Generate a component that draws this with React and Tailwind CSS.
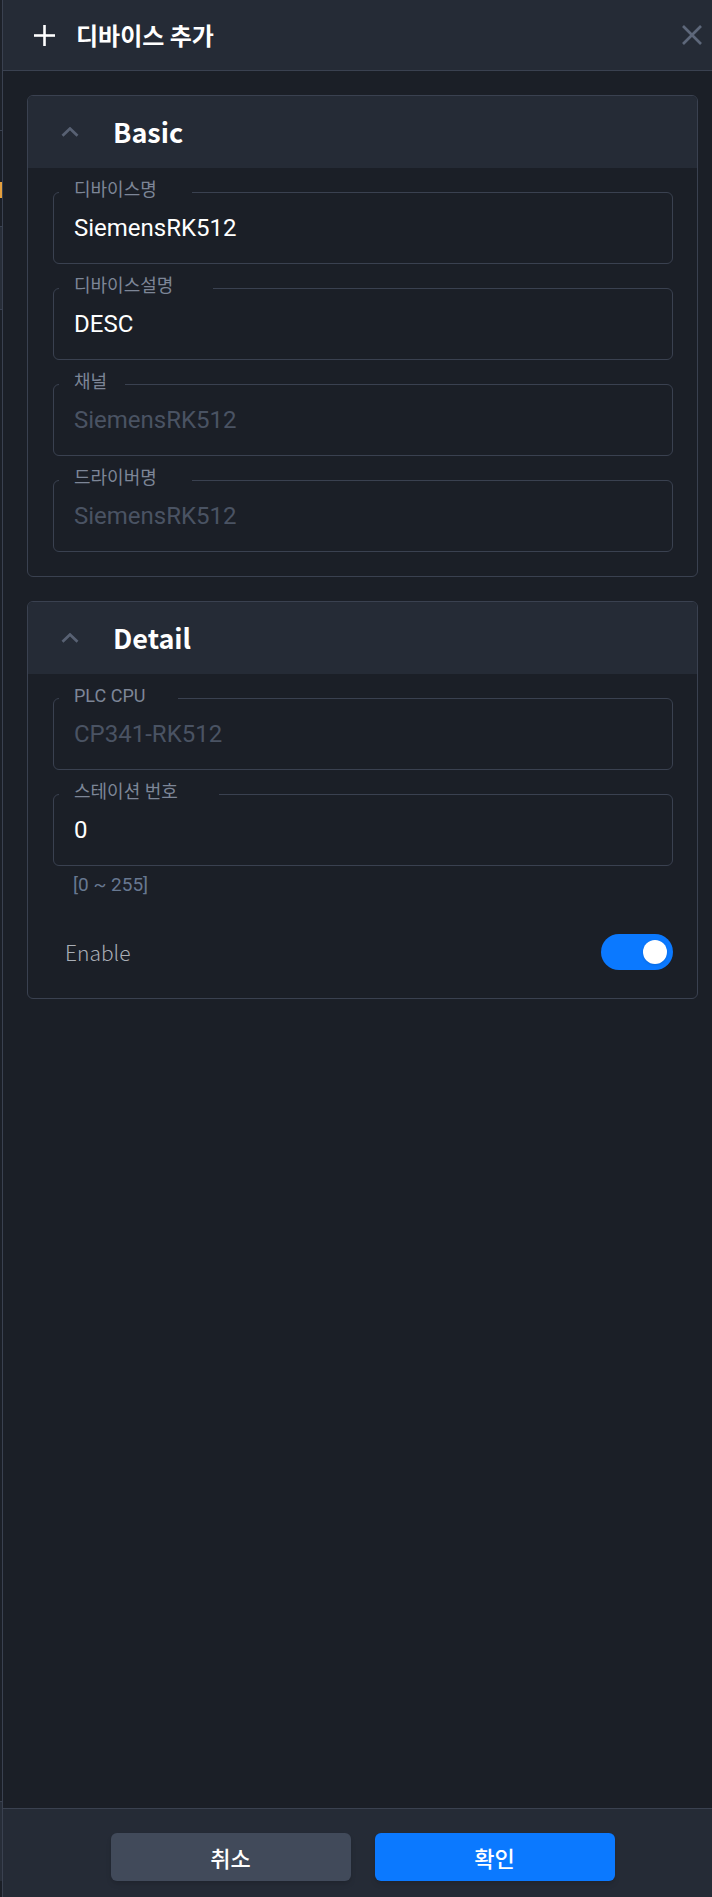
import React from "react";

const FONT_UI = { fontFamily: 'Roboto, "Noto Sans CJK KR", sans-serif' };
const FONT_KR = { fontFamily: '"Noto Sans CJK KR", "Noto Sans", sans-serif' };

function Field({ label, value, notch, disabled }) {
  return (
    <div className="relative h-[72px] rounded-[6px] border border-[#3a4150] flex items-center pl-[20px]">
      <span
        className="absolute left-[5px] top-[-14px] h-[22px] bg-[#1b1f27] pl-[15px] text-[18px] leading-[22px] text-[#7d8697] whitespace-nowrap"
        style={{ ...FONT_UI, width: notch }}
      >
        {label}
      </span>
      <span
        className={
          "text-[24px] leading-[28px] " +
          (disabled ? "text-[#4a5363]" : "text-white")
        }
        style={FONT_UI}
      >
        {value}
      </span>
    </div>
  );
}

function Chevron() {
  return (
    <svg width="18" height="10" viewBox="0 0 18 10" className="shrink-0">
      <polyline
        points="1.5,8.8 9,1.6 16.5,8.8"
        fill="none"
        stroke="#586173"
        strokeWidth="2.8"
      />
    </svg>
  );
}

function Card({ title, children }) {
  return (
    <div className="rounded-[6px] border border-[#3a4150] overflow-hidden">
      <div className="h-[72px] bg-[#252b36] flex items-center pl-[33px]">
        <Chevron />
        <span
          className="ml-[34px] text-[27px] leading-[32px] font-bold text-white"
          style={FONT_KR}
        >
          {title}
        </span>
      </div>
      {children}
    </div>
  );
}

function LeftStrip() {
  return (
    <div className="w-[2px] shrink-0 h-full flex flex-col bg-[#1b1f27]">
      <div className="h-[130px] bg-[#1d2129]" />
      <div className="h-[1px] bg-[#3a4150]" />
      <div className="h-[51px]" />
      <div className="h-[16px] bg-[#e5a03e]" />
      <div className="h-[28px]" />
      <div className="h-[1px] bg-[#3a4150]" />
      <div className="h-[82px] bg-[#272d38]" />
      <div className="h-[1px] bg-[#3a4150]" />
      <div className="flex-1" />
      <div className="h-[1px] bg-[#3a4150]" />
      <div className="h-[79px] bg-[#272d38]" />
      <div className="h-[16px]" />
    </div>
  );
}

export default function App() {
  return (
    <div className="w-[712px] h-[1897px] overflow-hidden flex bg-[#1b1f27]">
      <LeftStrip />
      <div className="w-[720px] shrink-0 h-full flex flex-col border-l border-[#3a4150] bg-[#1b1f27]">
        {/* Header */}
        <div className="h-[71px] shrink-0 border-b border-[#3a4150] bg-[#252b36] flex items-center justify-between pl-[31px] pr-[20px]">
          <div className="flex items-center">
            <svg width="21" height="21" viewBox="0 0 21 21">
              <line x1="0" y1="10.5" x2="21" y2="10.5" stroke="#ffffff" strokeWidth="2.6" />
              <line x1="10.5" y1="0" x2="10.5" y2="21" stroke="#ffffff" strokeWidth="2.6" />
            </svg>
            <span
              className="ml-[21px] text-[24px] leading-[30px] font-bold text-white"
              style={FONT_KR}
            >
              디바이스 추가
            </span>
          </div>
          <svg width="20" height="20" viewBox="0 0 20 20">
            <line x1="1" y1="1" x2="19" y2="19" stroke="#5d677a" strokeWidth="2.6" />
            <line x1="19" y1="1" x2="1" y2="19" stroke="#5d677a" strokeWidth="2.6" />
          </svg>
        </div>

        {/* Body */}
        <div className="flex-1 flex flex-col gap-[24px] pt-[24px] pl-[24px] pr-[24px]">
          <Card title="Basic">
            <div className="flex flex-col gap-[24px] pt-[24px] pb-[24px] pl-[25px] pr-[24px]">
              <Field label="디바이스명" value="SiemensRK512" notch={133} />
              <Field label="디바이스설명" value="DESC" notch={154} />
              <Field label="채널" value="SiemensRK512" notch={66} disabled />
              <Field label="드라이버명" value="SiemensRK512" notch={133} disabled />
            </div>
          </Card>

          <Card title="Detail">
            <div className="flex flex-col pt-[24px] pb-[28px] pl-[25px] pr-[24px]">
              <Field label="PLC CPU" value="CP341-RK512" notch={119} disabled />
              <div className="mt-[24px]">
                <Field label="스테이션 번호" value="0" notch={160} />
              </div>
              <div
                className="mt-[7px] pl-[20px] text-[19px] leading-[24px] text-[#687891]"
                style={FONT_UI}
              >
                [0 ~ 255]
              </div>
              <div className="mt-[37px] h-[36px] flex items-center justify-between pl-[12px]">
                <span
                  className="text-[21px] leading-[28px] font-light text-[#a9aeb6]"
                  style={FONT_KR}
                >
                  Enable
                </span>
                <div className="w-[72px] h-[36px] rounded-full bg-[#0b79ff] flex items-center justify-end pr-[6px]">
                  <div className="w-[24px] h-[24px] rounded-full bg-white shadow-sm" />
                </div>
              </div>
            </div>
          </Card>
        </div>

        {/* Footer */}
        <div className="h-[89px] shrink-0 border-t border-[#3a4150] bg-[#252b36] flex justify-center gap-[24px] pt-[24px]">
          <button
            className="w-[240px] h-[48px] rounded-[6px] bg-[#414a5a] text-white text-[22px] font-medium shadow-md"
            style={FONT_KR}
          >
            취소
          </button>
          <button
            className="w-[240px] h-[48px] rounded-[6px] bg-[#0b79ff] text-white text-[22px] font-medium shadow-md"
            style={FONT_KR}
          >
            확인
          </button>
        </div>
      </div>
    </div>
  );
}
